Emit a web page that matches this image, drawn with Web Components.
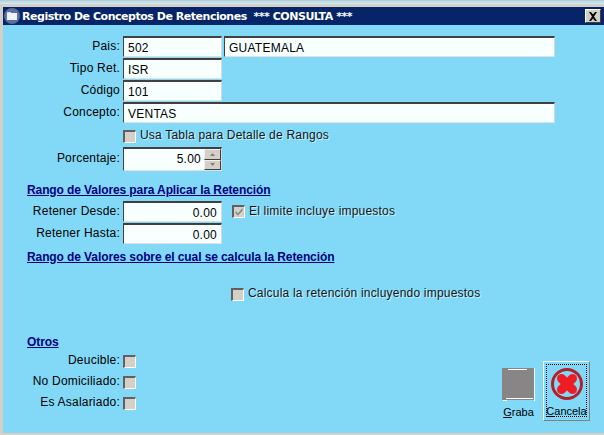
<!DOCTYPE html>
<html>
<head>
<meta charset="utf-8">
<title>Registro De Conceptos De Retenciones</title>
<style>
  html, body { margin: 0; padding: 0; background: #82d9f7; }
  body { width: 604px; height: 435px; overflow: hidden; font-family: "Liberation Sans", Arial, sans-serif; font-size: 12px; color: #000; }
</style>
</head>
<body>
<app-window heading="Registro De Conceptos De Retenciones  *** CONSULTA ***">
  <form-row label="Pais:" top="11">
    <text-box w="99">502</text-box>
    <text-box w="331" gap="2">GUATEMALA</text-box>
  </form-row>
  <form-row label="Tipo Ret." top="1"><text-box w="99">ISR</text-box></form-row>
  <form-row label="Código" top="1"><text-box w="99">101</text-box></form-row>
  <form-row label="Concepto:" top="1"><text-box w="432">VENTAS</text-box></form-row>
  <form-row top="6"><check-box label="Usa Tabla para Detalle de Rangos"></check-box></form-row>
  <form-row label="Porcentaje:" top="4"><spin-box>5.00</spin-box></form-row>
  <section-title style="margin-top:12px">Rango de Valores para Aplicar la Retención</section-title>
  <form-row label="Retener Desde:" top="3">
    <text-box w="99" align="right">0.00</text-box>
    <check-box label="El limite incluye impuestos" checked style="margin-left:10px"></check-box>
  </form-row>
  <form-row label="Retener Hasta:" top="1"><text-box w="99" align="right">0.00</text-box></form-row>
  <section-title style="margin-top:6px">Rango de Valores sobre el cual se calcula la Retención</section-title>
  <check-box label="Calcula la retención incluyendo impuestos" style="margin:22px 0 0 228px"></check-box>
  <bottom-area>
    <div>
      <section-title style="margin-top:0">Otros</section-title>
      <form-row label="Deucible:" top="4"><check-box></check-box></form-row>
      <form-row label="No Domiciliado:" top="7"><check-box></check-box></form-row>
      <form-row label="Es Asalariado:" top="7"><check-box></check-box></form-row>
    </div>
    <tool-button slot="actions" label="Graba" hot="G" kind="save"></tool-button>
    <tool-button slot="actions" label="Cancela" hot="C" kind="cancel" focused></tool-button>
  </bottom-area>
</app-window>
<script>
// title bar plus the pale blue client area
class AppWindow extends HTMLElement {
  constructor() {
    super();
    this.attachShadow({ mode: 'open' });
    this.shadowRoot.innerHTML = `
      <style>
        :host { display: flex; flex-direction: column; width: 604px; height: 435px; box-sizing: border-box; background: #82d9f7; border-top: 1px solid #c8c8c8; }
        .strip { height: 2px; background: #aee4f6; flex: none; }
        .edge { height: 4px; background: #d4d0c8; border-top: 1px solid #e4e4e4; box-sizing: border-box; flex: none; }
        .body { flex: 1; display: flex; flex-direction: column; border-left: 3px solid #d4d0c8; border-bottom: 2px solid #d4d0c8; min-height: 0; }
        .bar { height: 18px; background: #062468; display: flex; align-items: center; color: #fff; font: bold 11px "DejaVu Sans", sans-serif; letter-spacing: -.47px; white-space: pre; flex: none; }
        .ico { width: 16px; height: 16px; margin: 0 2px 0 1px; flex: none; }
        .bar span { flex: 1; }
        .close { width: 16px; height: 14px; margin-right: 3px; box-sizing: border-box; background: #d4d0c8; border: 1px solid; border-color: #fff #404040 #404040 #fff; display: flex; align-items: center; justify-content: center; }
        .client { flex: 1; display: flex; flex-direction: column; min-height: 0; }
      </style>
      <div class="strip"></div><div class="edge"></div>
      <div class="body">
        <div class="bar">
          <svg class="ico" viewBox="0 0 16 16"><circle cx="8" cy="8" r="8" fill="#5a6f9c"/><rect x="3" y="5" width="10" height="7" fill="#eef2f8"/><rect x="3" y="4" width="4" height="1" fill="#cfd8e6"/></svg>
          <span></span>
          <div class="close"><svg width="10" height="9" viewBox="0 0 10 9"><path d="M1 0h2l2 2.500 2-2.500h2L6 4.500 9 9H7L5 6.500 3 9H1l3-4.500z" fill="#000"/></svg></div>
        </div>
        <div class="client"><slot></slot></div>
      </div>`;
  }
  connectedCallback() {
    this.shadowRoot.querySelector('.bar span').textContent = this.getAttribute('heading');
  }
}

// right aligned label column, controls start at x=123
class FormRow extends HTMLElement {
  constructor() {
    super();
    this.attachShadow({ mode: 'open' });
    this.shadowRoot.innerHTML = `
      <style>
        :host { display: flex; align-items: center; }
        label { width: 117px; margin-right: 3px; text-align: right; white-space: nowrap; letter-spacing: .22px; flex: none; position: relative; top: -1px; }
      </style>
      <label></label><slot></slot>`;
  }
  connectedCallback() {
    this.shadowRoot.querySelector('label').textContent = this.getAttribute('label') || '';
    this.style.marginTop = (this.getAttribute('top') || 0) + 'px';
  }
}

class TextBox extends HTMLElement {
  constructor() {
    super();
    this.attachShadow({ mode: 'open' });
    this.shadowRoot.innerHTML = `
      <style>
        :host { display: block; box-sizing: border-box; height: 21px; padding: 2px 4px 0 4px; background: #f7ffff; border: 1px solid; border-width: 2px 1px 1px 1px; border-color: #404040 #d8d8d8 #e0e0e0 #404040; white-space: nowrap; letter-spacing: .25px; line-height: 16px; overflow: hidden; }
      </style>
      <slot></slot>`;
  }
  connectedCallback() {
    this.style.width = this.getAttribute('w') + 'px';
    if (this.getAttribute('gap')) this.style.marginLeft = this.getAttribute('gap') + 'px';
    if (this.getAttribute('align')) this.style.textAlign = this.getAttribute('align');
  }
}

class SpinBox extends HTMLElement {
  constructor() {
    super();
    this.attachShadow({ mode: 'open' });
    this.shadowRoot.innerHTML = `
      <style>
        :host { display: flex; box-sizing: border-box; width: 99px; height: 24px; background: #f7ffff; border: 1px solid; border-width: 2px 1px 1px 1px; border-color: #404040 #d8d8d8 #e0e0e0 #404040; letter-spacing: .25px; }
        .val { flex: 1; text-align: right; padding: 2px 3px 0 0; line-height: 16px; }
        .btns { width: 17px; display: flex; flex-direction: column; flex: none; }
        .btn { flex: 1; box-sizing: border-box; background: #d4d0c8; border: 1px solid; border-color: #f0f0f0 #404040 #404040 #f0f0f0; display: flex; align-items: center; justify-content: center; }
      </style>
      <div class="val"><slot></slot></div>
      <div class="btns">
        <div class="btn"><svg width="5" height="3"><path d="M2.500 0L5 3H0z" fill="#808080"/></svg></div>
        <div class="btn"><svg width="5" height="3"><path d="M2.500 3L5 0H0z" fill="#808080"/></svg></div>
      </div>`;
  }
}

class CheckBox extends HTMLElement {
  constructor() {
    super();
    this.attachShadow({ mode: 'open' });
    this.shadowRoot.innerHTML = `
      <style>
        :host { display: flex; align-items: center; height: 14px; white-space: nowrap; letter-spacing: .2px; }
        .box { width: 13px; height: 13px; box-sizing: border-box; background: #d4d0c8; border: 1px solid; border-width: 2px 1px 1px 2px; border-color: #606060 #fff #fff #606060; flex: none; display: flex; }
        .txt { margin-left: 4px; position: relative; top: -1px; color: #181818; text-shadow: 1px 1px 0 rgba(255,255,255,.55); }
        .txt:empty { display: none; }
        svg { display: none; }
        :host([checked]) svg { display: block; }
      </style>
      <div class="box"><svg width="10" height="10" viewBox="0 0 10 10"><path d="M1.500 4l2.500 2.500L8.500 1v2.500L4 8.500 1.500 6z" fill="#808080"/></svg></div>
      <span class="txt"></span>`;
  }
  connectedCallback() {
    this.shadowRoot.querySelector('.txt').textContent = this.getAttribute('label') || '';
  }
}

class SectionTitle extends HTMLElement {
  constructor() {
    super();
    this.attachShadow({ mode: 'open' });
    this.shadowRoot.innerHTML = `
      <style>
        :host { display: block; margin-left: 24px; font-weight: bold; color: #000080; text-decoration: underline; letter-spacing: -.1px; line-height: 15px; white-space: nowrap; }
      </style>
      <slot></slot>`;
  }
}

class BottomArea extends HTMLElement {
  constructor() {
    super();
    this.attachShadow({ mode: 'open' });
    this.shadowRoot.innerHTML = `
      <style>
        :host { display: flex; flex: 1; justify-content: space-between; align-items: flex-end; padding: 0 14px 12px 0; min-height: 0; }
        .left { align-self: flex-start; margin-top: 34px; }
        .right { display: flex; align-items: flex-end; gap: 8px; }
      </style>
      <div class="left"><slot></slot></div>
      <div class="right"><slot name="actions"></slot></div>`;
  }
}

class ToolButton extends HTMLElement {
  constructor() {
    super();
    this.attachShadow({ mode: 'open' });
    this.shadowRoot.innerHTML = `
      <style>
        :host { display: flex; flex-direction: column; align-items: center; box-sizing: border-box; width: 33px; padding-bottom: 2px; }
        :host([focused]) { width: 47px; height: 60px; padding: 3px 0 0 0; border: 1px solid; border-color: #fff #808080 #808080 #fff; }
        .focus { display: flex; flex-direction: column; align-items: center; }
        :host([focused]) .focus { width: 39px; height: 51px; outline: 1px dotted #000; padding-top: 3px; box-sizing: border-box; }
        svg { display: block; }
        .lbl { font-size: 11px; line-height: 14px; margin-top: 4px; white-space: nowrap; }
        u { text-underline-offset: 1px; }
      </style>
      <div class="focus"><span class="art"></span><span class="lbl"></span></div>`;
  }
  connectedCallback() {
    const kind = this.getAttribute('kind');
    const art = kind === 'cancel'
      ? `<svg width="32" height="32" viewBox="0 0 32 32"><circle cx="16" cy="16" r="14.500" fill="none" stroke="#b2202a" stroke-width="3"/><path d="M10.500 10.500l11 11M21.500 10.500l-11 11" fill="none" stroke="#f01c24" stroke-width="9" stroke-linecap="round"/></svg>`
      : `<svg width="33" height="33" viewBox="0 0 33 33"><rect width="32" height="32" fill="#878585"/><path d="M6 1.500h19M4 30.500h27M32.500 0v33M1 32.500h4" stroke="#fff"/></svg>`;
    this.shadowRoot.querySelector('.art').innerHTML = art;
    const label = this.getAttribute('label');
    const hot = this.getAttribute('hot');
    this.shadowRoot.querySelector('.lbl').innerHTML = `<u>${hot}</u>${label.slice(hot.length)}`;
  }
}

customElements.define('app-window', AppWindow);
customElements.define('form-row', FormRow);
customElements.define('text-box', TextBox);
customElements.define('spin-box', SpinBox);
customElements.define('check-box', CheckBox);
customElements.define('section-title', SectionTitle);
customElements.define('bottom-area', BottomArea);
customElements.define('tool-button', ToolButton);
</script>
</body>
</html>
